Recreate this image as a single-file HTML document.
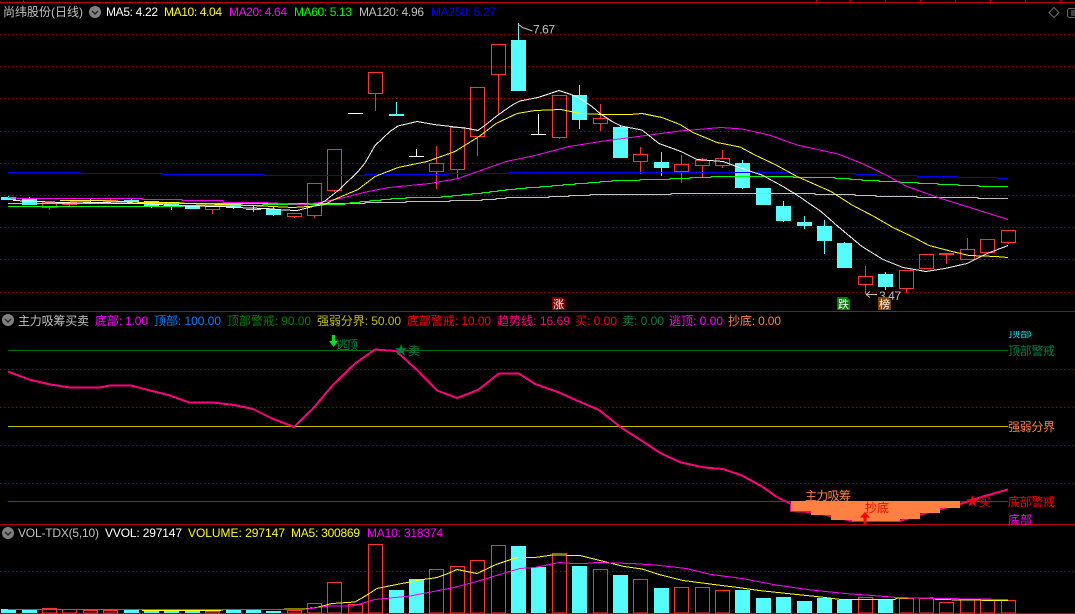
<!DOCTYPE html>
<html lang="zh">
<head>
<meta charset="utf-8">
<title>尚纬股份(日线)</title>
<style>
html,body{margin:0;padding:0;background:#000;width:1075px;height:614px;overflow:hidden}
svg{display:block}
text{font-family:"Liberation Sans","WenQuanYi Zen Hei","Noto Sans CJK SC",sans-serif;font-size:12px;white-space:pre}
.l{fill:none;stroke-width:1;shape-rendering:crispEdges;stroke-linejoin:miter}
.s{fill:none;stroke-width:1;shape-rendering:crispEdges}
</style>
</head>
<body>
<svg xmlns="http://www.w3.org/2000/svg" width="1075" height="614" viewBox="0 0 1075 614">
<defs>
<clipPath id="c1"><rect x="1000" y="331" width="70" height="8"/></clipPath>
<pattern id="dots" x="0" y="0" width="4" height="1" patternUnits="userSpaceOnUse"><rect x="0" y="0" width="1" height="1" fill="#a00000"/></pattern>
</defs>
<rect width="1075" height="614" fill="#000"/>

<!-- frame lines -->
<g fill="#c00000" shape-rendering="crispEdges">
<rect x="0" y="2" width="1075" height="1"/>
<rect x="0" y="311" width="1075" height="1"/>
<rect x="0" y="524" width="1075" height="1"/>
<rect x="0" y="613" width="1075" height="1"/>
<rect x="23" y="0" width="1" height="2"/><rect x="816" y="0" width="1" height="2"/><rect x="850" y="0" width="1" height="2"/><rect x="885" y="0" width="1" height="2"/><rect x="920" y="0" width="1" height="2"/><rect x="955" y="0" width="1" height="2"/><rect x="990" y="0" width="1" height="2"/><rect x="1025" y="0" width="1" height="2"/><rect x="1060" y="0" width="1" height="2"/>
</g>

<!-- grid -->
<g fill="url(#dots)" shape-rendering="crispEdges">
<rect x="0" y="34" width="1075" height="1"/><rect x="0" y="66" width="1075" height="1"/><rect x="0" y="98" width="1075" height="1"/><rect x="0" y="131" width="1075" height="1"/><rect x="0" y="163" width="1075" height="1"/><rect x="0" y="195" width="1075" height="1"/><rect x="0" y="227" width="1075" height="1"/><rect x="0" y="259" width="1075" height="1"/><rect x="0" y="292" width="1075" height="1"/>
<rect x="0" y="369" width="1075" height="1"/><rect x="0" y="407" width="1075" height="1"/><rect x="0" y="445" width="1075" height="1"/><rect x="0" y="483" width="1075" height="1"/><rect x="0" y="571" width="1075" height="1"/>
</g>

<!-- cyan candles -->
<g fill="#54fcfc" shape-rendering="crispEdges">
<rect x="1" y="197" width="15" height="3"/><rect x="8" y="196" width="1" height="4"/>
<rect x="22" y="199" width="15" height="6"/><rect x="29" y="197" width="1" height="3"/>
<rect x="124" y="200" width="15" height="2"/><rect x="131" y="198" width="1" height="3"/>
<rect x="144" y="201" width="15" height="6"/><rect x="151" y="206" width="1" height="2"/>
<rect x="164" y="204" width="15" height="3"/><rect x="171" y="206" width="1" height="4"/>
<rect x="185" y="205" width="15" height="4"/>
<rect x="226" y="202" width="15" height="6"/><rect x="233" y="207" width="1" height="2"/>
<rect x="246" y="209" width="15" height="1"/><rect x="253" y="206" width="1" height="6"/>
<rect x="266" y="209" width="15" height="6"/><rect x="273" y="207" width="1" height="9"/>
<rect x="389" y="114" width="15" height="2"/><rect x="396" y="102" width="1" height="13"/>
<rect x="511" y="40" width="15" height="51"/><rect x="518" y="23" width="1" height="18"/>
<rect x="572" y="95" width="15" height="25"/><rect x="579" y="85" width="1" height="44"/>
<rect x="613" y="127" width="15" height="31"/><rect x="620" y="125" width="1" height="3"/>
<rect x="654" y="162" width="15" height="6"/><rect x="661" y="152" width="1" height="24"/>
<rect x="735" y="163" width="15" height="25"/><rect x="742" y="160" width="1" height="29"/>
<rect x="756" y="188" width="15" height="17"/>
<rect x="776" y="206" width="15" height="15"/><rect x="783" y="201" width="1" height="21"/>
<rect x="797" y="222" width="15" height="4"/><rect x="804" y="216" width="1" height="13"/>
<rect x="817" y="226" width="15" height="15"/><rect x="824" y="220" width="1" height="34"/>
<rect x="837" y="243" width="15" height="25"/><rect x="844" y="242" width="1" height="2"/>
<rect x="878" y="274" width="15" height="13"/><rect x="885" y="272" width="1" height="18"/>
</g>

<!-- white doji -->
<g fill="#fff" shape-rendering="crispEdges">
<rect x="83" y="202" width="15" height="1"/><rect x="90" y="199" width="1" height="5"/>
<rect x="348" y="113" width="15" height="1"/>
<rect x="409" y="156" width="15" height="1"/><rect x="416" y="149" width="1" height="7"/>
<rect x="531" y="134" width="15" height="1"/><rect x="538" y="114" width="1" height="20"/>
</g>

<!-- red candles -->
<path fill="none" stroke="#ff3232" stroke-width="1" shape-rendering="crispEdges" d="
M42.5 202.5h14v5h-14zM49.5 208V210
M205.5 203.5h14v6h-14zM212.5 210V214
M287.5 213.5h14v3h-14zM294.5 217V218
M307.5 183.5h14v32h-14zM314.5 216V218
M327.5 149.5h14v41h-14zM334.5 191V192
M368.5 72.5h14v21h-14zM375.5 94V111
M429.5 163.5h14v8h-14zM436.5 163V146M436.5 172V189
M450.5 127.5h14v42h-14zM457.5 170V178
M470.5 87.5h14v49h-14zM477.5 137V156
M491.5 44.5h14v30h-14zM498.5 75V114
M552.5 95.5h14v42h-14zM559.5 138V139
M593.5 118.5h14v5h-14zM600.5 118V104M600.5 124V131
M633.5 154.5h14v7h-14zM640.5 154V147M640.5 162V174
M674.5 164.5h14v7h-14zM681.5 164V155M681.5 172V183
M695.5 160.5h14v5h-14zM702.5 160V158M702.5 166V177
M715.5 158.5h14v7h-14zM722.5 158V150M722.5 166V168
M858.5 276.5h14v8h-14zM865.5 276V266M865.5 285V294
M899.5 270.5h14v18h-14zM906.5 289V293
M919.5 254.5h14v14h-14z
M960.5 249.5h14v10h-14zM967.5 249V238
M980.5 239.5h14v13h-14zM987.5 253V254
M1001.5 230.5h14v12h-14zM1008.5 243V244"/>
<g fill="#ff3232" shape-rendering="crispEdges">
<rect x="62" y="202" width="15" height="3"/><rect x="69" y="204" width="1" height="2"/>
<rect x="103" y="200" width="15" height="2"/><rect x="110" y="198" width="1" height="3"/>
<rect x="939" y="253" width="15" height="2"/><rect x="946" y="254" width="1" height="10"/>
</g>

<!-- MA lines main -->
<path class="s" stroke="#0000ff" d="M8 172.5H80V173.5H162V174.5H264V175.5H365V174.5H448V173.5H509V172.5H793V173.5H855V174.5H876V175.5H917V176.5H957V177.5H998V178.5H1008"/>
<path class="s" stroke="#c0c0c0" d="M8 203.5H365V202.5H406V201.5H450V200.5H482V199.5H496V198.5H506V197.5H549V196.5H569V195.5H590V194.5H671V193.5H815V194.5H855V195.5H876V196.5H917V197.5H978V198.5H1008"/>
<path class="s" stroke="#00ff00" d="M8 206.5H182V205.5H263V204.5H345V203.5H350V202.5H360V201.5H370V200.5H381V199.5H391V198.5H406V197.5H442V196.5H452V195.5H462V194.5H472V193.5H482V192.5H490V191.5H498V190.5H506V189.5H516V188.5H526V187.5H540V186.5H552V185.5H563V184.5H575V183.5H588V182.5H600V181.5H612V180.5H640V179.5H670V178.5H690V177.5H711V176.5H793V177.5H835V178.5H850V179.5H862V180.5H879V181.5H900V182.5H918V183.5H938V184.5H958V185.5H979V186.5H1008"/>
<polyline class="l" stroke="#ff00ff" points="8,197.5 20,198.5 142,198.5 142,199.5 182,199.5 182,200.5 223,200.5 223,202.5 263,202.5 303,204.5 320,202.5 340,198.5 368,191.5 389,187.5 430,183.5 458,178.5 482,170 506,161.5 535,155.5 569,146.5 604,141 638,136.5 680,131 721,127.5 742,129 769,135 797,145 838,154 862,163.5 886,175 907,186.5 941,198.5 976,209.5 1008,219.5"/>
<polyline class="l" stroke="#ffff00" points="60,200.5 100,200.5 143,202.5 177,202.5 187,203.5 223,204.5 263,206 293,207.5 315,206 325,204.5 332,200.5 358,189.5 375,176.5 398,167.5 427,161.5 455,151.5 479,136.5 496,123.5 517,113.5 535,110.5 561,109.5 580,113.5 604,114.5 630,114.5 642,113.5 662,117.5 680,124.5 693,132.5 717,142.5 740,147 755,155 776,165 797,176.5 831,191.5 852,205 874,216.5 893,227.5 914,237.5 929,245.5 952,251.5 969,255.5 996,256.5 1008,257.5"/>
<polyline class="l" stroke="#ffffff" points="13,200.5 40,201.5 60,202.5 80,202 100,202.5 143,203.5 167,205 187,206 223,206.5 247,208 267,208.5 283,210 297,210.5 303,209 313,206.5 325,201 340,189 358,171.5 365,163 375,145.5 390,131.5 398,126 417,121.5 434,124.5 451,126.5 468,128.5 478,130.5 486,124.5 498,115 513,104.5 520,101 538,97.5 559,90.5 571,94.5 580,98.5 592,106.5 600,113.5 612,121.5 621,126 642,130 659,143.5 681,151.5 697,159.5 723,161.5 742,168.5 762,175 783,186.5 797,195 821,211.5 838,226.5 862,246.5 883,259.5 903,267.5 926,271.5 945,268.5 967,263.5 986,254 1008,245.5"/>

<!-- max / min marks -->
<path d="M518.5 24.5l4 3l10 3.5M518.5 24.5v3" fill="none" stroke="#c0c0c0" stroke-width="1"/>
<text x="533" y="33.5" fill="#c0c0c0" textLength="22" lengthAdjust="spacing">7.67</text>
<path d="M877 294.5H866M866 294.5l4-3M866 294.5l4 3" fill="none" stroke="#c0c0c0" stroke-width="1"/>
<text x="879" y="300" fill="#c0c0c0" textLength="22" lengthAdjust="spacing">3.47</text>

<!-- chips -->
<polygon points="552,297 562,297 565,300 565,310 552,310" fill="#800000"/>
<text x="553" y="308" fill="#fff" style="font-size:11px">涨</text>
<polygon points="837,297 847,297 850,300 850,310 837,310" fill="#008000"/>
<text x="838" y="308" fill="#fff" style="font-size:11px">跌</text>
<polygon points="878,297 888,297 891,300 891,310 878,310" fill="#804000"/>
<text x="879" y="308" fill="#fff" style="font-size:11px">榜</text>

<!-- header 1 -->
<text x="3" y="16" fill="#c0c0c0" textLength="80" lengthAdjust="spacing">尚纬股份(日线)</text>
<circle cx="95" cy="12" r="6" fill="#808080"/><path d="M92 11l3 3l3-3" fill="none" stroke="#222" stroke-width="1.4"/>
<text x="106" y="16" fill="#fff" textLength="52" lengthAdjust="spacing">MA5: 4.22</text>
<text x="164" y="16" fill="#ffff00" textLength="58" lengthAdjust="spacing">MA10: 4.04</text>
<text x="229" y="16" fill="#ff00ff" textLength="58" lengthAdjust="spacing">MA20: 4.64</text>
<text x="294" y="16" fill="#00ff00" textLength="58" lengthAdjust="spacing">MA60: 5.13</text>
<text x="359" y="16" fill="#c0c0c0" textLength="65" lengthAdjust="spacing">MA120: 4.96</text>
<text x="431" y="16" fill="#0000ff" textLength="65" lengthAdjust="spacing">MA250: 5.27</text>
<polygon points="1054,7.5 1059,12.5 1054,17.5 1049,12.5" fill="none" stroke="#666"/>
<rect x="1067.5" y="8.5" width="12" height="9" rx="2" fill="none" stroke="#666"/>
<rect x="1071" y="10" width="4" height="6" fill="#444"/>

<!-- panel 2 -->
<circle cx="8" cy="320" r="6" fill="#808080"/><path d="M5 319l3 3l3-3" fill="none" stroke="#222" stroke-width="1.4"/>
<text x="18" y="325" fill="#c0c0c0" textLength="71" lengthAdjust="spacing">主力吸筹买卖</text>
<text x="95" y="325" fill="#ff00ff" textLength="53" lengthAdjust="spacing">底部: 1.00</text>
<text x="154" y="325" fill="#0080ff" textLength="67" lengthAdjust="spacing">顶部: 100.00</text>
<text x="227" y="325" fill="#008000" textLength="84" lengthAdjust="spacing">顶部警戒: 90.00</text>
<text x="317" y="325" fill="#c0c000" textLength="84" lengthAdjust="spacing">强弱分界: 50.00</text>
<text x="407" y="325" fill="#ff0000" textLength="84" lengthAdjust="spacing">底部警戒: 10.00</text>
<text x="497" y="325" fill="#ff0080" textLength="73" lengthAdjust="spacing">趋势线: 16.69</text>
<text x="575" y="325" fill="#ff0000" textLength="42" lengthAdjust="spacing">买: 0.00</text>
<text x="622" y="325" fill="#008040" textLength="42" lengthAdjust="spacing">卖: 0.00</text>
<text x="669" y="325" fill="#ff00ff" textLength="54" lengthAdjust="spacing">逃顶: 0.00</text>
<text x="728" y="325" fill="#ff8040" textLength="53" lengthAdjust="spacing">抄底: 0.00</text>

<g shape-rendering="crispEdges">
<rect x="8" y="350" width="1000" height="1" fill="#007000"/>
<rect x="8" y="426" width="1000" height="1" fill="#c0c000"/>
<rect x="8" y="501" width="1000" height="1" fill="#e00000"/>
</g>
<polyline fill="none" stroke="#ff0080" stroke-width="2" shape-rendering="crispEdges" points="8,371.5 29,379.5 50,384.5 70,387.5 100,387.5 110,385.5 131,385.5 148,390 170,395.5 189,402.5 213,402.5 234,405 253,409 272,418.5 294,427 313,408.5 332,386 355,363.5 375,349.5 396,351 417,370 437,390.5 457,398 478,390 499,373.5 519,373.5 535,384 559,392.5 578,401 599,410 621,427.5 642,441 661,453.5 681,462.5 704,467.5 723,469 742,475.5 762,486.5 776,496.5 791,504 791,511 811,512 831,516 852,521 900,521 921,514.5 940,509 960,504 983,496.5 1008,489.5"/>
<polygon fill="#ff8040" shape-rendering="crispEdges" points="791,501 960,501 960,508 940,508 940,513 920,513 920,519 900,519 900,521 852,521 852,520 831,520 831,515 811,515 811,511 791,511"/>

<!-- panel 2 signals -->
<path d="M332 335h3v6h3l-4.5 6l-4.5-6h3z" fill="#00e020"/>
<text x="336" y="349" fill="#008040" textLength="22" lengthAdjust="spacing">逃顶</text>
<polygon points="401,344 402.6,348.3 407,348.3 403.5,351 404.8,355.5 401,352.8 397.2,355.5 398.5,351 395,348.3 399.4,348.3" fill="#008040"/>
<text x="408" y="355" fill="#008040">卖</text>
<text x="805" y="500" fill="#ff8040" textLength="46" lengthAdjust="spacing">主力吸筹</text>
<text x="865" y="512" fill="#ff0000" textLength="24" lengthAdjust="spacing">抄底</text>
<path d="M865 512l5 5.5h-3.5v6.5h-3v-6.5h-3.5z" fill="#ff0000"/>
<polygon points="972.4,495 974,499.3 978.4,499.3 974.9,502 976.2,506.5 972.4,503.8 968.6,506.5 969.9,502 966.4,499.3 970.8,499.3" fill="#ff0000"/>
<text x="979" y="506" fill="#ff0000">买</text>

<!-- right labels -->
<text x="1008" y="337" fill="#00e0e0" clip-path="url(#c1)" textLength="24" lengthAdjust="spacing">顶部</text>
<text x="1008" y="355" fill="#008040" textLength="47" lengthAdjust="spacing">顶部警戒</text>
<text x="1008" y="431" fill="#ff8040" textLength="47" lengthAdjust="spacing">强弱分界</text>
<text x="1008" y="506" fill="#ff0000" textLength="47" lengthAdjust="spacing">底部警戒</text>
<text x="1008" y="524" fill="#ff00ff" textLength="24" lengthAdjust="spacing">底部</text>

<!-- panel 3 -->
<circle cx="8" cy="533" r="6" fill="#808080"/><path d="M5 532l3 3l3-3" fill="none" stroke="#222" stroke-width="1.4"/>
<text x="18" y="537" fill="#c0c0c0" textLength="81" lengthAdjust="spacing">VOL-TDX(5,10)</text>
<text x="105" y="537" fill="#fff" textLength="77" lengthAdjust="spacing">VVOL: 297147</text>
<text x="188" y="537" fill="#ffff00" textLength="97" lengthAdjust="spacing">VOLUME: 297147</text>
<text x="291" y="537" fill="#ffff00" textLength="69" lengthAdjust="spacing">MA5: 300869</text>
<text x="367" y="537" fill="#ff00ff" textLength="76" lengthAdjust="spacing">MA10: 318374</text>

<!-- volume bars cyan -->
<g fill="#54fcfc" shape-rendering="crispEdges">
<rect x="1" y="609" width="15" height="4"/><rect x="22" y="610" width="15" height="3"/>
<rect x="124" y="610" width="15" height="3"/><rect x="144" y="610" width="15" height="3"/>
<rect x="164" y="610" width="15" height="3"/><rect x="185" y="610" width="15" height="3"/>
<rect x="226" y="610" width="15" height="3"/><rect x="246" y="610" width="15" height="3"/>
<rect x="266" y="611" width="15" height="2"/>
<rect x="389" y="590" width="15" height="23"/><rect x="409" y="579" width="15" height="34"/>
<rect x="511" y="546" width="15" height="67"/><rect x="531" y="567" width="15" height="46"/>
<rect x="572" y="566" width="15" height="47"/><rect x="613" y="575" width="15" height="38"/>
<rect x="654" y="588" width="15" height="25"/><rect x="735" y="590" width="15" height="23"/>
<rect x="756" y="598" width="15" height="15"/><rect x="776" y="597" width="15" height="16"/>
<rect x="797" y="601" width="15" height="12"/><rect x="817" y="598" width="15" height="15"/>
<rect x="837" y="600" width="15" height="13"/><rect x="878" y="599" width="15" height="14"/>
</g>
<path fill="none" stroke="#ff3232" stroke-width="1" shape-rendering="crispEdges" d="
M42.5 608.5h14V613h-14z
M62.5 609.5h14V613h-14z
M83.5 610.5h14V613h-14z
M103.5 610.5h14V613h-14z
M205.5 611.5h14V613h-14z
M287.5 610.5h14V613h-14z
M307.5 603.5h14V613h-14z
M327.5 582.5h14V613h-14z
M348.5 604.5h14V613h-14z
M368.5 544.5h14V613h-14z
M429.5 569.5h14V613h-14z
M450.5 566.5h14V613h-14z
M470.5 560.5h14V613h-14z
M491.5 545.5h14V613h-14z
M552.5 553.5h14V613h-14z
M593.5 569.5h14V613h-14z
M633.5 579.5h14V613h-14z
M674.5 587.5h14V613h-14z
M695.5 587.5h14V613h-14z
M715.5 590.5h14V613h-14z
M858.5 597.5h14V613h-14z
M899.5 598.5h14V613h-14z
M919.5 598.5h14V613h-14z
M939.5 602.5h14V613h-14z
M960.5 599.5h14V613h-14z
M980.5 599.5h14V613h-14z
M1001.5 600.5h14V613h-14z"/>
<polyline class="l" stroke="#ffff00" points="142,610.5 220,610.5 224,609.5 265,609.5 303,609 317,607.5 332,603.5 355,602 367,595 377,588.5 389,586 420,580 437,577.5 448,573.5 457,569.5 477,573.5 496,564.5 517,557.5 535,557.5 552,555 580,555.5 604,561.5 624,566.5 642,569 659,574.5 683,580.5 714,584.5 738,587.5 759,590.5 797,594.5 821,597 841,599.5 895,599.5 897,598 933,598 936,599.5 996,600.5 1008,600.5"/>
<polyline class="l" stroke="#ff00ff" points="8,609.5 303,609.5 330,606 353,606 375,599.5 410,596 454,587.5 482,580 506,572.5 520,568.5 535,567.5 552,564 559,562.5 573,563.5 585,563.5 597,562.5 631,563.5 655,565 686,568.5 711,574.5 742,578.5 776,585 811,590 845,593.5 879,596 897,597.5 941,598.5 1008,599.5"/>
</svg>
</body>
</html>
